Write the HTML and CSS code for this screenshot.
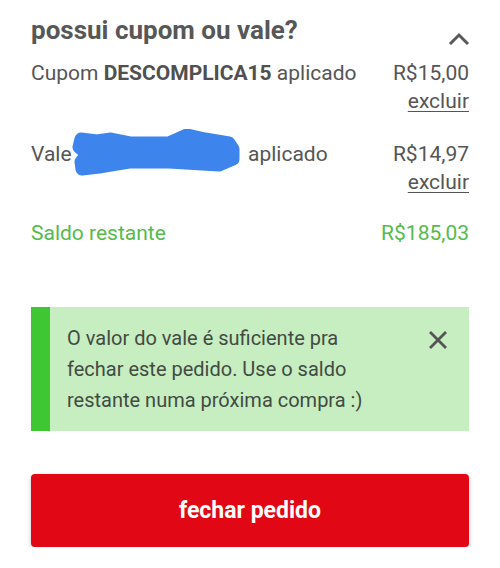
FILE: index.html
```html
<!DOCTYPE html>
<html lang="pt-BR">
<head>
<meta charset="utf-8">
<link rel="stylesheet" href="styles.css">
</head>
<body>
<main class="panel">
  <header class="head">
    <h1 class="title">possui cupom ou vale?</h1>
    <svg class="chevron" width="22" height="14" viewBox="0 0 22 14"><path d="M2 12 L11 3 L20 12" fill="none" stroke="#5a5a5a" stroke-width="3"/></svg>
  </header>

  <section class="item">
    <div class="row">
      <span>Cupom <b>DESCOMPLICA15</b> aplicado</span>
      <span>R$15,00</span>
    </div>
    <a class="remove">excluir</a>
  </section>

  <section class="item">
    <div class="row">
      <span>Vale <span class="hidden"><svg class="scribble" width="176" height="50" viewBox="0 0 176 50"><path d="M12,10 L28,12 L42,10 L62,14 L100,14 L118,6 L136,10 L160,14 L164,20 L164,30 L150,36 L100,33 L60,33 L30,38 L13,40 L12,33 L18,25 L10,18 Z" fill="#3d84ec" stroke="#3d84ec" stroke-width="13" stroke-linejoin="round"/></svg></span> aplicado</span>
      <span>R$14,97</span>
    </div>
    <a class="remove">excluir</a>
  </section>

  <div class="row balance">
    <span>Saldo restante</span>
    <span>R$185,03</span>
  </div>

  <div class="notice">
    <p class="notice-text">O valor do vale é suficiente pra fechar este pedido. Use o saldo restante numa próxima compra :)</p>
    <svg class="close" width="20" height="20" viewBox="0 0 20 20"><path d="M2 2 L18 18 M18 2 L2 18" stroke="#555" stroke-width="2.8" fill="none"/></svg>
  </div>

  <button class="submit">fechar pedido</button>
</main>
</body>
</html>
```

FILE: styles.css
```css
* { box-sizing: border-box; }
html, body { margin: 0; padding: 0; background: #fff; }
body { font-family: Roboto, "Noto Sans", sans-serif; color: #555; }

.panel {
  width: 500px;
  padding: 15px 31px 0 31px;
  display: flex;
  flex-direction: column;
}

.head {
  display: flex;
  justify-content: space-between;
  align-items: flex-start;
}
.title {
  margin: 0;
  font-size: 26px;
  line-height: 30px;
  font-weight: 700;
  color: #575757;
}
.chevron { margin-top: 17px; margin-right: -1px; }

.item {
  display: flex;
  flex-direction: column;
  align-items: flex-end;
  margin-top: 13px;
}
.item + .item { margin-top: 25px; }

.row {
  width: 100%;
  display: flex;
  justify-content: space-between;
  font-size: 21px;
  line-height: 28px;
  color: #555;
}
.row b { font-weight: 700; color: #505050; }

.remove {
  font-size: 21px;
  line-height: 28px;
  color: #555;
  text-decoration: underline;
  text-underline-offset: 3px;
  text-decoration-thickness: 1px;
}

.hidden {
  display: inline-block;
  position: relative;
  width: 166px;
  height: 20px;
  vertical-align: middle;
}
.scribble {
  position: absolute;
  left: -8px;
  top: -16px;
}

.balance {
  margin-top: 23px;
  color: #55bb4c;
}

.notice {
  margin-top: 60px;
  display: flex;
  justify-content: space-between;
  align-items: flex-start;
  background: #c6eec1;
  border-left: 19px solid #3fc733;
  padding: 16px 21px 15px 17px;
}
.notice-text {
  margin: 0;
  width: 300px;
  font-size: 20px;
  line-height: 31px;
  color: #434a43;
}
.close { margin-top: 7px; }

.submit {
  margin-top: 43px;
  height: 73px;
  border: none;
  border-radius: 4px;
  background: #e10714;
  color: #fff;
  font-family: Roboto, "Noto Sans", sans-serif;
  font-size: 23px;
  font-weight: 700;
  box-shadow: 0 2px 5px rgba(0,0,0,0.22);
}
```
